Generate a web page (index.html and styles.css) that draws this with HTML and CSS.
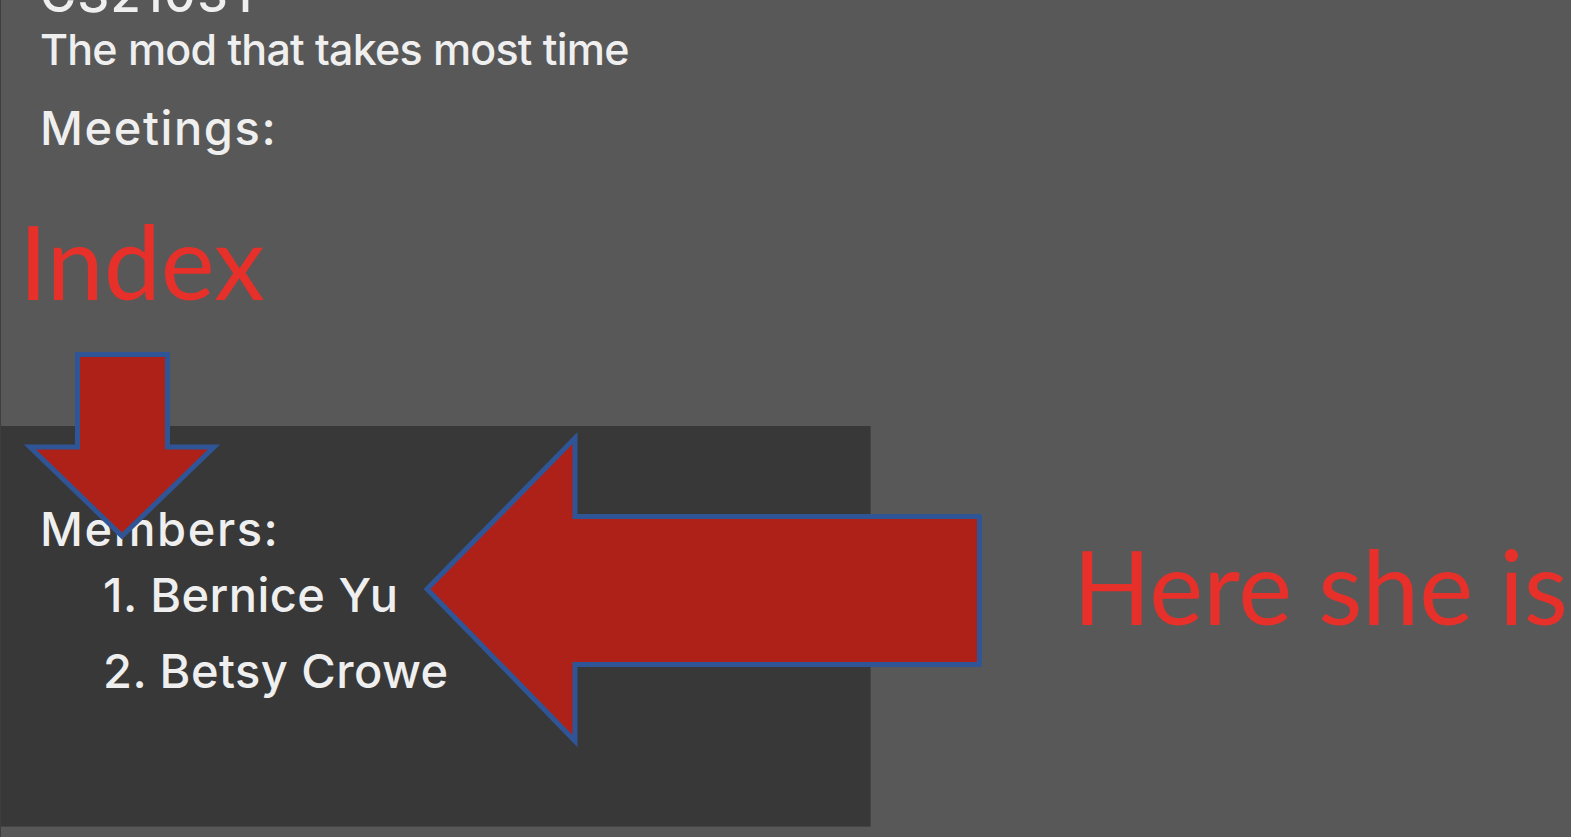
FILE: index.html
```html
<!DOCTYPE html>
<html lang="en">
<head>
<meta charset="utf-8">
<title>Module card</title>
<link rel="stylesheet" href="styles.css">
</head>
<body>
<div class="screen">
  <section class="module">
    <div class="module-code">CS2103T</div>
    <div class="module-desc">The mod that takes most time</div>
    <div class="section-label">Meetings:</div>
  </section>
  <section class="members">
    <div class="section-label">Members:</div>
    <ol class="member-list">
      <li>1. Bernice Yu</li>
      <li>2. Betsy Crowe</li>
    </ol>
  </section>
  <div class="bottom-strip"></div>

  <div class="note note-index">Index</div>
  <div class="note note-here">Here she is</div>
  <svg class="arrows" width="1571" height="837" viewBox="0 0 1571 837" aria-hidden="true">
    <polygon class="arrow" points="77.5,354.5 167.5,354.5 167.5,447 214,447 122,536 30,447 77.5,447"/>
    <polygon class="arrow" points="427,589 575,438 575,516.5 979.5,516.5 979.5,664.5 575,664.5 575,741"/>
  </svg>
</div>
</body>
</html>
```
FILE: styles.css
```css
html, body {
  margin: 0;
  padding: 0;
}
body {
  background: #585858;
  width: 1571px;
  height: 837px;
  overflow: hidden;
  font-family: Inter, "Liberation Sans", Arial, sans-serif;
  font-weight: 500;
  color: #efefef;
}
.screen {
  position: relative;
  width: 1571px;
  height: 837px;
  display: flex;
  flex-direction: column;
  border-left: 1px solid #3e3e3e;
  box-sizing: border-box;
}
.module {
  height: 426px;
  padding-left: 39px;
  display: flex;
  flex-direction: column;
}
.module-code {
  font-size: 49px;
  line-height: 56px;
  letter-spacing: 1.5px;
  margin-top: -33px;
}
.module-desc {
  font-size: 43px;
  line-height: 52px;
  letter-spacing: -0.8px;
  word-spacing: 0.5px;
}
.section-label {
  font-size: 47px;
  line-height: 56px;
  letter-spacing: 1.6px;
}
.module .section-label {
  margin-top: 25px;
}
.members {
  width: 870px;
  height: 401px;
  box-sizing: border-box;
  background: #383838;
  border-right: 1px solid #444;
  border-bottom: 1px solid #444;
  padding: 75px 0 0 39px;
}
.member-list {
  list-style: none;
  margin: 0;
  padding: 0 0 0 63px;
}
.member-list li {
  font-size: 47px;
  line-height: 76px;
  letter-spacing: 0.45px;
}
.bottom-strip {
  flex: 1;
}
.note {
  position: absolute;
  font-family: Lato, "Open Sans", sans-serif;
  font-weight: 400;
  color: #e8302a;
  font-size: 102px;
  line-height: 1;
  white-space: nowrap;
}
.note-index {
  left: 18px;
  top: 210px;
}
.note-here {
  left: 1072px;
  top: 535px;
}
.arrows {
  position: absolute;
  left: -1px;
  top: 0;
  pointer-events: none;
}
.arrow {
  fill: #ad2118;
  stroke: #2f5597;
  stroke-width: 5;
  stroke-linejoin: miter;
}
```
